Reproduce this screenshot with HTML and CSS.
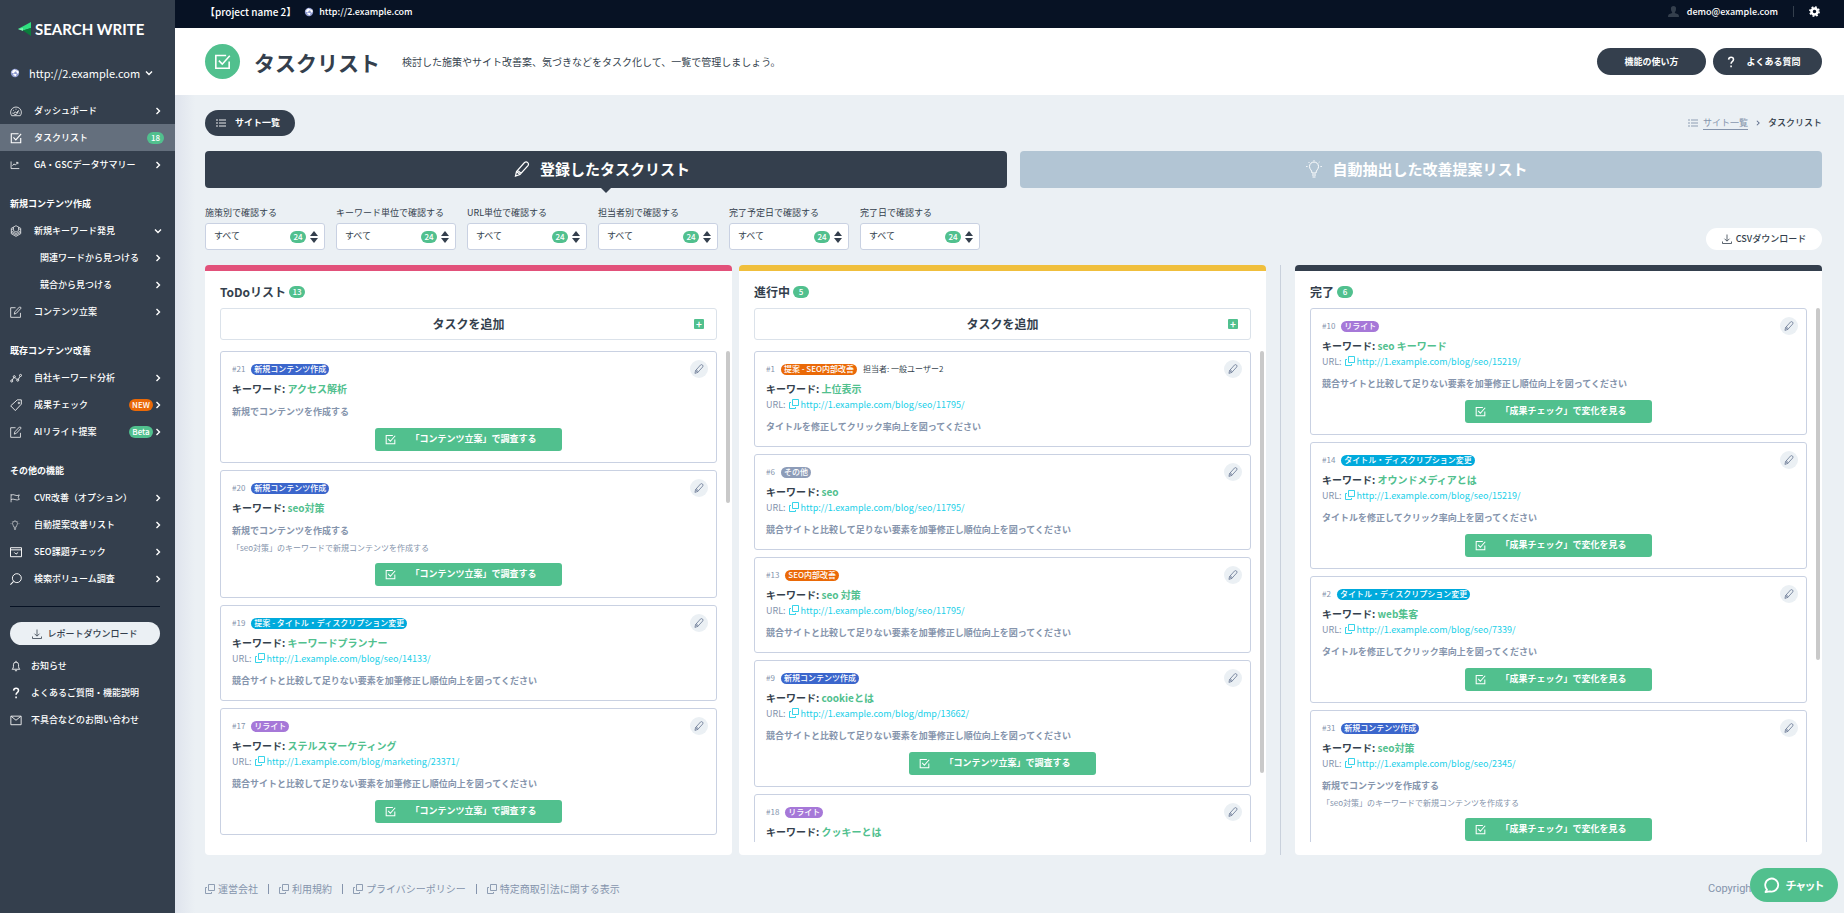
FILE: index.html
```html
<!DOCTYPE html>
<html lang="ja">
<head>
<meta charset="utf-8">
<title>タスクリスト | SEARCH WRITE</title>
<link rel="stylesheet" href="styles.css">
</head>
<body>
<svg class="sprite" aria-hidden="true">
  <symbol id="chev" viewBox="0 0 8 8"><path d="M2.5 1l3 3-3 3" fill="none" stroke="currentColor" stroke-width="1.4"/></symbol>
  <symbol id="chev-down" viewBox="0 0 8 8"><path d="M1 2.5l3 3 3-3" fill="none" stroke="currentColor" stroke-width="1.4"/></symbol>
  <symbol id="globe" viewBox="0 0 12 12"><circle cx="6" cy="6" r="5" fill="#8f9bd0"/><path d="M3 3l3-1.500 1 2-2 2-2 .5zM7.500 4l2.500-1 .5 3-2 1zM5 7l3 .5-1 2.500-1.500 0z" fill="#fff"/><path d="M2 4.500l3 1.500M6 3l3 1M4 8l3 0" stroke="#fff" stroke-width="1.500"/></symbol>
  <symbol id="gauge" viewBox="0 0 14 14"><path d="M2 12.500A6.300 6.300 0 1 1 12 12.500zM5.300 11a1.500 1.500 0 1 1 2.200-1.800L10 6.500 8 10.500q-.5 1-2.700.5M2.700 9.500h1.200M3.700 6l.9.700M7 4.300v1.200M11.300 9.500h-1" fill="none" stroke="currentColor" stroke-width=".9"/></symbol>
  <symbol id="check" viewBox="0 0 14 14"><path d="M12.500 7v5.500H1.500V2H10M4 6.300L6.800 9.200L13 2.200" fill="none" stroke="currentColor" stroke-width="1.300"/></symbol>
  <symbol id="chart" viewBox="0 0 14 14"><path d="M1.500 2v10H13M3.500 8l2-2.500 2 1.500 3.500-3.500M8.500 3.300H11v2.500" fill="none" stroke="currentColor" stroke-width="1.100"/></symbol>
  <symbol id="layers" viewBox="0 0 14 14"><path d="M7 .8l5.500 3v6.400L7 13.300l-5.500-3.100V3.800zM1.500 7L7 10l5.500-3M1.500 8.700L7 11.700l5.500-3M1.500 5.500L4 4.200M12.500 5.500L10 4.200M4 2.500v4L7 8.200l3-1.700v-4" fill="none" stroke="currentColor" stroke-width=".8"/></symbol>
  <symbol id="edit" viewBox="0 0 14 14"><path d="M6.500 2H.8v11.200h11.400V8M5 9.500l.6-2.600L11 1.200q1.500-.4 2 1.200L7.500 8.500z" fill="none" stroke="currentColor" stroke-width=".9"/></symbol>
  <symbol id="nodes" viewBox="0 0 14 14"><g fill="none" stroke="currentColor" stroke-width="1"><circle cx="2" cy="10.500" r="1.200"/><circle cx="5" cy="5.500" r="1.200"/><circle cx="9" cy="9.500" r="1.200"/><circle cx="12.300" cy="4" r="1.200"/><path d="M2.600 9.400L4.400 6.600M5.800 6.400l2.300 2.300M9.700 8.500l2-3.400"/></g></symbol>
  <symbol id="tag" viewBox="0 0 14 14"><path d="M.8 8L8.500 1h4.700v5l-7 7.500zM9.500 4.600a.9.900 0 1 0 1.200-.8.900.9 0 0 0-1.200.8z" fill="none" stroke="currentColor" stroke-width="1"/></symbol>
  <symbol id="flag" viewBox="0 0 14 14"><path d="M1.500 1.500V13M1.500 3q3-1.500 5.500 0t6-.3L11.500 6 13 9q-3 1.500-6 .2t-5.500 0" fill="none" stroke="currentColor" stroke-width="1"/></symbol>
  <symbol id="bulb" viewBox="0 0 16 18"><path d="M6 13c0-3-2.500-3.500-2.500-6.500a4.500 4.500 0 0 1 9 0C12.500 9.500 10 10 10 13zM6 15h4M6.500 17h3M8 .2v1M2.500 2l.9.900M13.500 2l-.9.900M.2 6.500h1.300M14.500 6.500h1.300" fill="none" stroke="currentColor" stroke-width="1"/></symbol>
  <symbol id="window" viewBox="0 0 14 14"><path d="M.6 2h12.800v10.500H.6zM.6 4.500h12.800M5 7.500L7 9.500l2.500-2" fill="none" stroke="currentColor" stroke-width="1.100"/></symbol>
  <symbol id="search" viewBox="0 0 14 14"><circle cx="8" cy="6" r="5.200" fill="none" stroke="currentColor" stroke-width="1.100"/><path d="M4.200 9.800L.5 13.500" stroke="currentColor" stroke-width="1.200"/></symbol>
  <symbol id="download" viewBox="0 0 10 10"><path d="M5 .5v6.500M2.500 4.700L5 7.200l2.500-2.500M.5 7.500v2h9v-2" fill="none" stroke="currentColor" stroke-width=".8"/></symbol>
  <symbol id="bell" viewBox="0 0 14 14"><path d="M2.500 10.800q1.500-1 1.500-3V5.500a3 3 0 0 1 6 0v2.300q0 2 1.500 3zM5.700 12.500h2.600M7 1v1.500" fill="none" stroke="currentColor" stroke-width="1"/></symbol>
  <symbol id="question" viewBox="0 0 14 14"><path d="M4.200 4.200q.2-2.700 2.900-2.700 2.800 0 2.800 2.500 0 1.500-1.500 2.500-1.300.9-1.300 2.500M7.100 11v2" fill="none" stroke="currentColor" stroke-width="1.800"/></symbol>
  <symbol id="mail" viewBox="0 0 14 14"><path d="M1 2.500h12v10H1zM1.500 2.800L7 7.300l5.500-4.500" fill="none" stroke="currentColor" stroke-width="1"/></symbol>
  <symbol id="list" viewBox="0 0 10 8"><path d="M0 1h2M0 4h2M0 7h2M3 1h7M3 4h7M3 7h7" stroke="currentColor" stroke-width=".9"/></symbol>
  <symbol id="pencil" viewBox="0 0 16 16"><path d="M1.500 15L2.500 10.500 10.500 1.500q1.800-1.200 3.200.2t.3 3L6 13.500zM2.500 10.500l3.500 3M3.500 9.300l3.500 3" fill="none" stroke="currentColor" stroke-width="1.200"/></symbol>
  <symbol id="ext" viewBox="0 0 10 10"><path d="M3.500.5h6v6h-6zM2 3.500H.5v6h6V8" fill="none" stroke="currentColor" stroke-width=".9"/></symbol>
  <symbol id="user" viewBox="0 0 12 12"><path d="M6 0q2.800 0 2.800 3Q8.800 5.500 7.500 6.700v1L11 9q1 .5 1 3H0q0-2.500 1-3l3.500-1.300v-1Q3.200 5.500 3.200 3 3.200 0 6 0z" fill="currentColor"/></symbol>
  <symbol id="gear" viewBox="0 0 12 12"><circle cx="6" cy="6" r="3.300" fill="none" stroke="currentColor" stroke-width="2.800"/><circle cx="6" cy="6" r="5" fill="none" stroke="currentColor" stroke-width="1.800" stroke-dasharray="2 1.927"/></symbol>
</svg>

<div class="app">
  <aside class="sidebar">
    <a class="logo" href="#">
      <svg width="13" height="14" viewBox="0 0 13 14" aria-hidden="true"><path d="M0 7L13 0v6L5 8.500z" fill="#2fe07f"/><path d="M0 7l5-1 0 3z" fill="#7df0ae"/><path d="M5 8.500L13 6v8z" fill="#0b7d3c"/></svg>
      <span>SEARCH WRITE</span>
    </a>
    <button class="site" type="button"><svg class="i10"><use href="#globe"/></svg><span>http://2.example.com</span><svg class="i8"><use href="#chev-down"/></svg></button>

    <nav class="nav">
      <a class="item" href="#"><svg><use href="#gauge"/></svg><span>ダッシュボード</span><svg class="i8"><use href="#chev"/></svg></a>
      <a class="item active" href="#"><svg><use href="#check"/></svg><span>タスクリスト</span><b class="badge">18</b></a>
      <a class="item" href="#"><svg class="small"><use href="#chart"/></svg><span>GA・GSCデータサマリー</span><svg class="i8"><use href="#chev"/></svg></a>
      <h2>新規コンテンツ作成</h2>
      <a class="item" href="#"><svg><use href="#layers"/></svg><span>新規キーワード発見</span><svg class="i8 down"><use href="#chev-down"/></svg></a>
      <a class="item sub" href="#"><span>関連ワードから見つける</span><svg class="i8"><use href="#chev"/></svg></a>
      <a class="item sub" href="#"><span>競合から見つける</span><svg class="i8"><use href="#chev"/></svg></a>
      <a class="item" href="#"><svg><use href="#edit"/></svg><span>コンテンツ立案</span><svg class="i8"><use href="#chev"/></svg></a>
      <h2>既存コンテンツ改善</h2>
      <a class="item" href="#"><svg><use href="#nodes"/></svg><span>自社キーワード分析</span><svg class="i8"><use href="#chev"/></svg></a>
      <a class="item" href="#"><svg><use href="#tag"/></svg><span>成果チェック</span><b class="badge wide new">NEW</b><svg class="i8"><use href="#chev"/></svg></a>
      <a class="item" href="#"><svg><use href="#edit"/></svg><span>AIリライト提案</span><b class="badge wide">Beta</b><svg class="i8"><use href="#chev"/></svg></a>
      <h2>その他の機能</h2>
      <a class="item" href="#"><svg class="small"><use href="#flag"/></svg><span>CVR改善（オプション）</span><svg class="i8"><use href="#chev"/></svg></a>
      <a class="item" href="#"><svg class="small"><use href="#bulb"/></svg><span>自動提案改善リスト</span><svg class="i8"><use href="#chev"/></svg></a>
      <a class="item" href="#"><svg><use href="#window"/></svg><span>SEO課題チェック</span><svg class="i8"><use href="#chev"/></svg></a>
      <a class="item" href="#"><svg><use href="#search"/></svg><span>検索ボリューム調査</span><svg class="i8"><use href="#chev"/></svg></a>
    </nav>
    <hr>
    <button class="report" type="button"><svg class="i10"><use href="#download"/></svg>レポートダウンロード</button>
    <nav class="nav help">
      <a class="item" href="#"><svg><use href="#bell"/></svg><span>お知らせ</span></a>
      <a class="item" href="#"><svg><use href="#question"/></svg><span>よくあるご質問・機能説明</span></a>
      <a class="item" href="#"><svg><use href="#mail"/></svg><span>不具合などのお問い合わせ</span></a>
    </nav>
  </aside>

  <div class="main">
    <div class="topbar">
      <span class="project">【project name 2】</span>
      <a class="host" href="#"><svg class="i10"><use href="#globe"/></svg>http://2.example.com</a>
      <a class="account" href="#"><svg class="i12"><use href="#user"/></svg>demo@example.com</a>
      <button class="settings" type="button" aria-label="設定"><svg class="i12"><use href="#gear"/></svg></button>
    </div>

    <header class="header">
      <span class="page-icon"><svg><use href="#check"/></svg></span>
      <h1>タスクリスト</h1>
      <p>検討した施策やサイト改善案、気づきなどをタスク化して、一覧で管理しましょう。</p>
      <button class="pill" type="button">機能の使い方</button>
      <button class="pill faq" type="button"><svg><use href="#question"/></svg>よくある質問</button>
    </header>

    <div class="content">
      <div class="crumb-row">
        <a class="sites" href="#"><svg><use href="#list"/></svg>サイト一覧</a>
        <nav class="crumbs"><svg class="list"><use href="#list"/></svg><a href="#">サイト一覧</a><svg class="sep"><use href="#chev"/></svg><b>タスクリスト</b></nav>
      </div>

      <div class="tabs">
        <button class="tab on" type="button"><svg class="i16"><use href="#pencil"/></svg>登録したタスクリスト</button>
        <button class="tab" type="button"><svg class="bulb"><use href="#bulb"/></svg>自動抽出した改善提案リスト</button>
      </div>

      <div class="filters">
        <div class="filter"><label for="f1">施策別で確認する</label><div class="select"><select id="f1"><option>すべて</option></select><b class="badge">24</b><i></i></div></div>
        <div class="filter"><label for="f2">キーワード単位で確認する</label><div class="select"><select id="f2"><option>すべて</option></select><b class="badge">24</b><i></i></div></div>
        <div class="filter"><label for="f3">URL単位で確認する</label><div class="select"><select id="f3"><option>すべて</option></select><b class="badge">24</b><i></i></div></div>
        <div class="filter"><label for="f4">担当者別で確認する</label><div class="select"><select id="f4"><option>すべて</option></select><b class="badge">24</b><i></i></div></div>
        <div class="filter"><label for="f5">完了予定日で確認する</label><div class="select"><select id="f5"><option>すべて</option></select><b class="badge">24</b><i></i></div></div>
        <div class="filter"><label for="f6">完了日で確認する</label><div class="select"><select id="f6"><option>すべて</option></select><b class="badge">24</b><i></i></div></div>
        <button class="csv" type="button"><svg class="i10"><use href="#download"/></svg>CSVダウンロード</button>
      </div>

      <div class="board">
        <section class="col todo">
          <h3>ToDoリスト<b class="badge">13</b></h3>
          <button class="add" type="button">タスクを追加<span>+</span></button>
          <div class="scroll">
            <div class="cards">
              <article class="card">
                <button class="edit" type="button" aria-label="編集"><svg><use href="#pencil"/></svg></button>
                <div class="meta">#21<span class="tag blue">新規コンテンツ作成</span></div>
                <h4>キーワード: <em>アクセス解析</em></h4>
                <p class="desc">新規でコンテンツを作成する</p>
                <button class="cta" type="button"><svg><use href="#check"/></svg>「コンテンツ立案」で調査する</button>
              </article>
              <article class="card">
                <button class="edit" type="button" aria-label="編集"><svg><use href="#pencil"/></svg></button>
                <div class="meta">#20<span class="tag blue">新規コンテンツ作成</span></div>
                <h4>キーワード: <em>seo対策</em></h4>
                <p class="desc">新規でコンテンツを作成する</p>
                <p class="note">「seo対策」のキーワードで新規コンテンツを作成する</p>
                <button class="cta" type="button"><svg><use href="#check"/></svg>「コンテンツ立案」で調査する</button>
              </article>
              <article class="card">
                <button class="edit" type="button" aria-label="編集"><svg><use href="#pencil"/></svg></button>
                <div class="meta">#19<span class="tag cyan">提案 - タイトル・ディスクリプション変更</span></div>
                <h4>キーワード: <em>キーワードプランナー</em></h4>
                <p class="url">URL: <a href="#"><svg><use href="#ext"/></svg>http://1.example.com/blog/seo/14133/</a></p>
                <p class="desc">競合サイトと比較して足りない要素を加筆修正し順位向上を図ってください</p>
              </article>
              <article class="card">
                <button class="edit" type="button" aria-label="編集"><svg><use href="#pencil"/></svg></button>
                <div class="meta">#17<span class="tag purple">リライト</span></div>
                <h4>キーワード: <em>ステルスマーケティング</em></h4>
                <p class="url">URL: <a href="#"><svg><use href="#ext"/></svg>http://1.example.com/blog/marketing/23371/</a></p>
                <p class="desc">競合サイトと比較して足りない要素を加筆修正し順位向上を図ってください</p>
                <button class="cta" type="button"><svg><use href="#check"/></svg>「コンテンツ立案」で調査する</button>
              </article>
            </div>
            <span class="thumb"></span>
          </div>
        </section>

        <section class="col doing">
          <h3>進行中<b class="badge">5</b></h3>
          <button class="add" type="button">タスクを追加<span>+</span></button>
          <div class="scroll">
            <div class="cards">
              <article class="card">
                <button class="edit" type="button" aria-label="編集"><svg><use href="#pencil"/></svg></button>
                <div class="meta">#1<span class="tag orange">提案 - SEO内部改善</span><span class="owner">担当者: 一般ユーザー2</span></div>
                <h4>キーワード: <em>上位表示</em></h4>
                <p class="url">URL: <a href="#"><svg><use href="#ext"/></svg>http://1.example.com/blog/seo/11795/</a></p>
                <p class="desc">タイトルを修正してクリック率向上を図ってください</p>
              </article>
              <article class="card">
                <button class="edit" type="button" aria-label="編集"><svg><use href="#pencil"/></svg></button>
                <div class="meta">#6<span class="tag gray">その他</span></div>
                <h4>キーワード: <em>seo</em></h4>
                <p class="url">URL: <a href="#"><svg><use href="#ext"/></svg>http://1.example.com/blog/seo/11795/</a></p>
                <p class="desc">競合サイトと比較して足りない要素を加筆修正し順位向上を図ってください</p>
              </article>
              <article class="card">
                <button class="edit" type="button" aria-label="編集"><svg><use href="#pencil"/></svg></button>
                <div class="meta">#13<span class="tag orange">SEO内部改善</span></div>
                <h4>キーワード: <em>seo 対策</em></h4>
                <p class="url">URL: <a href="#"><svg><use href="#ext"/></svg>http://1.example.com/blog/seo/11795/</a></p>
                <p class="desc">競合サイトと比較して足りない要素を加筆修正し順位向上を図ってください</p>
              </article>
              <article class="card">
                <button class="edit" type="button" aria-label="編集"><svg><use href="#pencil"/></svg></button>
                <div class="meta">#9<span class="tag blue">新規コンテンツ作成</span></div>
                <h4>キーワード: <em>cookieとは</em></h4>
                <p class="url">URL: <a href="#"><svg><use href="#ext"/></svg>http://1.example.com/blog/dmp/13662/</a></p>
                <p class="desc">競合サイトと比較して足りない要素を加筆修正し順位向上を図ってください</p>
                <button class="cta" type="button"><svg><use href="#check"/></svg>「コンテンツ立案」で調査する</button>
              </article>
              <article class="card cut">
                <button class="edit" type="button" aria-label="編集"><svg><use href="#pencil"/></svg></button>
                <div class="meta">#18<span class="tag purple">リライト</span></div>
                <h4>キーワード: <em>クッキーとは</em></h4>
              </article>
            </div>
            <span class="thumb"></span>
          </div>
        </section>

        <span class="rule"></span>

        <section class="col done">
          <h3>完了<b class="badge">6</b></h3>
          <div class="scroll">
            <div class="cards">
              <article class="card">
                <button class="edit" type="button" aria-label="編集"><svg><use href="#pencil"/></svg></button>
                <div class="meta">#10<span class="tag purple">リライト</span></div>
                <h4>キーワード: <em>seo キーワード</em></h4>
                <p class="url">URL: <a href="#"><svg><use href="#ext"/></svg>http://1.example.com/blog/seo/15219/</a></p>
                <p class="desc">競合サイトと比較して足りない要素を加筆修正し順位向上を図ってください</p>
                <button class="cta" type="button"><svg><use href="#check"/></svg>「成果チェック」で変化を見る</button>
              </article>
              <article class="card">
                <button class="edit" type="button" aria-label="編集"><svg><use href="#pencil"/></svg></button>
                <div class="meta">#14<span class="tag cyan">タイトル・ディスクリプション変更</span></div>
                <h4>キーワード: <em>オウンドメディアとは</em></h4>
                <p class="url">URL: <a href="#"><svg><use href="#ext"/></svg>http://1.example.com/blog/seo/15219/</a></p>
                <p class="desc">タイトルを修正してクリック率向上を図ってください</p>
                <button class="cta" type="button"><svg><use href="#check"/></svg>「成果チェック」で変化を見る</button>
              </article>
              <article class="card">
                <button class="edit" type="button" aria-label="編集"><svg><use href="#pencil"/></svg></button>
                <div class="meta">#2<span class="tag cyan">タイトル・ディスクリプション変更</span></div>
                <h4>キーワード: <em>web集客</em></h4>
                <p class="url">URL: <a href="#"><svg><use href="#ext"/></svg>http://1.example.com/blog/seo/7339/</a></p>
                <p class="desc">タイトルを修正してクリック率向上を図ってください</p>
                <button class="cta" type="button"><svg><use href="#check"/></svg>「成果チェック」で変化を見る</button>
              </article>
              <article class="card">
                <button class="edit" type="button" aria-label="編集"><svg><use href="#pencil"/></svg></button>
                <div class="meta">#31<span class="tag blue">新規コンテンツ作成</span></div>
                <h4>キーワード: <em>seo対策</em></h4>
                <p class="url">URL: <a href="#"><svg><use href="#ext"/></svg>http://1.example.com/blog/seo/2345/</a></p>
                <p class="desc">新規でコンテンツを作成する</p>
                <p class="note">「seo対策」のキーワードで新規コンテンツを作成する</p>
                <button class="cta" type="button"><svg><use href="#check"/></svg>「成果チェック」で変化を見る</button>
              </article>
            </div>
            <span class="thumb"></span>
          </div>
        </section>
      </div>

      <footer class="footer">
        <a href="#"><svg><use href="#ext"/></svg>運営会社</a>
        <a href="#"><svg><use href="#ext"/></svg>利用規約</a>
        <a href="#"><svg><use href="#ext"/></svg>プライバシーポリシー</a>
        <a href="#"><svg><use href="#ext"/></svg>特定商取引法に関する表示</a>
        <small>Copyright</small>
      </footer>
    </div>
  </div>
</div>
<button class="chat" type="button"><svg viewBox="0 0 16 16" aria-hidden="true"><path d="M3 12.500A6.500 6.500 0 1 1 6 14.300L1.500 15z" fill="none" stroke="currentColor" stroke-width="1.800" stroke-linejoin="round"/></svg>チャット</button>
</body>
</html>
```
FILE: styles.css
```css
* { box-sizing: border-box; }
body, h1, h2, h3, h4, p { margin: 0; }
body {
  font: 500 9px/16px "Noto Sans CJK JP", sans-serif;
  color: #343f4d;
  background: #ebf0f4;
}
button { font: inherit; color: inherit; border: 0; background: none; padding: 0; }
a { color: inherit; text-decoration: none; }
svg { flex: none; width: 12px; height: 12px; }
em, i { font-style: normal; }
.sprite { display: none; }
.i8 { width: 8px; height: 8px; }
.i10 { width: 10px; height: 10px; }
.i12 { width: 11px; height: 11px; }
.i16 { width: 16px; height: 16px; }
.badge {
  display: inline-flex; align-items: center; justify-content: center;
  min-width: 16px; height: 12px; padding: 0 3px; border-radius: 6px;
  background: #51c08e; color: #fff; font-size: 8px; font-weight: 500; line-height: 12px;
}

.app { display: flex; height: 100vh; }

/* Sidebar */
.sidebar { flex: none; width: 175px; background: #343f4d; color: #fff; overflow: hidden; }
.logo { display: flex; align-items: center; gap: 4px; height: 58px; padding-left: 18px; font: 700 15px/16px Lato, sans-serif; }
.logo svg { width: 13px; height: 14px; }
.site { display: flex; align-items: center; width: 100%; height: 30px; padding: 0 22px 0 10px; font-size: 11px; font-weight: 400; }
.site span { margin: 0 auto 0 9px; }
.nav { padding-top: 9px; }
.nav h2 { height: 27px; margin-top: 12px; padding-left: 10px; font-size: 9px; font-weight: 700; line-height: 27px; }
.item { display: flex; align-items: center; height: 27px; padding: 0 13px 0 10px; }
.item > span { margin: 0 auto 0 12px; }
.item .small { width: 10px; height: 10px; margin-right: 2px; }
.item.active { background: #646f7d; padding-right: 11px; }
.item.active .badge { min-width: 17px; }
.item.sub > span { margin-left: 30px; }
.badge.wide { min-width: 24px; margin-right: 1px; padding: 0 2px; }
.badge.new { background: #ea6907; }
hr { height: 1px; margin: 14px 15px 15px 10px; border: 0; background: #071224; }
.report {
  display: flex; align-items: center; justify-content: center; gap: 5px;
  width: 150px; height: 23px; margin-left: 10px; border-radius: 12px;
  background: #ebf0f4; color: #343f4d;
}
.help { padding-top: 7px; }
.help .item > span { margin-left: 9px; }

/* Top bar and page header */
.main { flex: 1; min-width: 0; display: flex; flex-direction: column; }
.topbar { display: flex; align-items: center; height: 28px; padding: 0 30px 5px 30px; background: #071224; color: #fff; }
.project { font-size: 10px; line-height: 16px; }
.host, .account { display: flex; align-items: center; gap: 5px; }
.host { margin: 0 auto 0 8px; }
.account { gap: 8px; padding-right: 15px; border-right: 1px solid #343f4d; line-height: 10px; }
.account svg { color: #343f4d; }
.settings { display: flex; margin: 0 -6px 0 15px; }
.header { display: flex; align-items: center; height: 67px; padding: 0 22px 0 30px; background: #fff; }
.page-icon { display: flex; align-items: center; justify-content: center; width: 35px; height: 35px; border-radius: 50%; background: #51c08e; color: #fff; }
.page-icon svg { width: 17px; height: 17px; }
h1 { margin: 0 22px 0 14px; font-size: 21px; font-weight: 700; line-height: 32px; }
.header p { margin-right: auto; font-size: 10px; font-weight: 400; }
.pill { display: flex; align-items: center; justify-content: center; gap: 9px; width: 109px; height: 27px; margin-left: 7px; border-radius: 14px; background: #343f4d; color: #fff; font-weight: 700; }
.faq { padding-right: 9px; }

/* Content */
.content { flex: 1; min-height: 0; display: flex; flex-direction: column; padding: 15px 22px 0 30px; background: linear-gradient(90deg, #dfe4ed, #ebf0f4 20px); }
.crumb-row { display: flex; align-items: center; justify-content: space-between; }
.sites { display: flex; align-items: center; gap: 9px; height: 26px; padding: 0 15px 0 11px; border-radius: 13px; background: #343f4d; color: #fff; font-weight: 700; }
.sites svg, .list { width: 10px; height: 8px; }
.crumbs { display: flex; align-items: center; gap: 5px; }
.crumbs a { color: #8594ac; font-weight: 400; line-height: 12px; border-bottom: 1px solid #8594ac; }
.crumbs svg { color: #8594ac; }
.crumbs b { font-weight: 500; }
.crumbs .sep { width: 6px; height: 6px; margin: 0 2px; color: #5f6f8c; }
.tabs { display: grid; grid-template-columns: 1fr 1fr; gap: 13px; margin-top: 15px; }
.tab { position: relative; display: flex; align-items: center; justify-content: center; gap: 10px; height: 37px; padding: 0 8px 2px 0; border-radius: 4px; background: #b2c5d4; color: #fff; font-size: 15px; font-weight: 700; }
.tab.on { background: #343f4d; }
.tab.on::after { content: ""; position: absolute; top: 100%; left: 50%; margin-left: -5px; border: 5px solid transparent; border-top-color: #343f4d; border-bottom: 0; }
.tab .bulb { width: 16px; height: 18px; }
.filters { display: flex; align-items: flex-end; gap: 11px; margin-top: 17px; font-weight: 400; }
.filter label { display: block; margin-bottom: 2px; }
.select { position: relative; width: 120px; }
select { appearance: none; display: block; width: 100%; height: 27px; padding: 0 8px 2px; border: 1px solid #c9d1e2; border-radius: 3px; background: #fff; color: #343f4d; font: inherit; }
.select .badge { position: absolute; top: 8px; right: 19px; }
.select i { position: absolute; top: 8px; right: 8px; width: 7px; height: 12px; }
.select i::before, .select i::after { content: ""; position: absolute; left: 0; border: 4px solid transparent; }
.select i::before { top: 0; border-bottom: 5px solid #343f4d; border-top: 0; }
.select i::after { bottom: 0; border-top: 5px solid #343f4d; border-bottom: 0; }
.csv { display: flex; align-items: center; justify-content: center; gap: 4px; width: 116px; height: 22px; margin-left: auto; border-radius: 11px; background: #fff; font-weight: 500; }

/* Board */
.board { flex: 1; min-height: 0; display: flex; margin-top: 15px; }
.col { flex: 1; min-width: 0; display: flex; flex-direction: column; padding: 11px 15px 13px; border-top: 6px solid #343f4d; border-radius: 4px; background: #fff; }
.todo { margin-right: 7px; border-color: #e2517a; }
.doing { border-color: #f0bf3c; }
.rule { width: 1px; margin: 0 14px; background: #c9d1dc; }
h3 { display: flex; align-items: center; gap: 3px; height: 20px; margin-bottom: 6px; font-size: 12px; font-weight: 700; line-height: 20px; }
.add { position: relative; flex: none; height: 32px; margin-bottom: 11px; border: 1px solid #dbe2ea; border-radius: 3px; font-size: 12px; font-weight: 700; }
.add span { position: absolute; top: 10px; right: 12px; width: 10px; height: 10px; border-radius: 1px; background: #51c08e; color: #fff; font-size: 10px; line-height: 9px; }
.scroll { position: relative; flex: 1; min-height: 0; }
.cards { display: flex; flex-direction: column; gap: 7px; height: 100%; overflow-y: auto; scrollbar-width: none; }
.thumb { position: absolute; top: 0; right: -13px; width: 4px; height: 31%; border-radius: 2px; background: #c9c9c9; }
.doing .thumb { height: 86%; }
.done .thumb { height: 66%; }
.card { position: relative; flex: none; display: flex; flex-direction: column; padding: 9px 11px 10px; border: 1px solid #c9d1e2; border-radius: 3px; }
.cut { padding-bottom: 80px; }
.edit { position: absolute; top: 8px; right: 8px; display: flex; align-items: center; justify-content: center; width: 18px; height: 18px; border-radius: 50%; background: #ebf0f4; color: #5f6f8c; }
.edit svg { width: 10px; height: 10px; }
.meta { display: flex; align-items: center; gap: 6px; height: 16px; color: #8594ac; font-size: 8px; font-weight: 400; }
.tag { height: 11px; padding: 0 3px; border-radius: 6px; color: #fff; font-weight: 500; line-height: 10px; }
.owner { color: #343f4d; }
.blue { background: #3b66cc; }
.cyan { background: #00aadc; }
.purple { background: #a678d8; }
.orange { background: #ea6907; }
.gray { background: #8d9cb8; }
h4 { margin-top: 4px; padding-bottom: 1px; font-size: 10px; font-weight: 700; line-height: 15px; }
h4 em { color: #51c08e; }
.url { color: #8594ac; font-weight: 400; line-height: 15px; }
.url a { color: #20cfe8; }
.url svg { width: 10px; height: 10px; margin: 0 2px -1px 1px; }
.desc { margin-top: 7px; padding-bottom: 1px; color: #8594ac; font-weight: 700; }
.note { color: #8594ac; font-size: 8px; font-weight: 400; }
.cta { position: relative; align-self: center; width: 187px; height: 23px; margin: 7px 0 1px; padding: 0 0 1px 10px; border-radius: 3px; background: #51c08e; color: #fff; font-weight: 700; }
.cta svg { position: absolute; left: 10px; top: 6px; width: 11px; height: 11px; }

/* Footer */
.footer { flex: none; display: flex; align-items: center; height: 58px; padding-top: 10px; color: #8594ac; font-size: 10px; font-weight: 400; }
.footer a { display: flex; align-items: center; gap: 3px; line-height: 10px; }
.footer a + a { margin-left: 10px; padding-left: 10px; border-left: 1px solid #8594ac; }
.footer svg { width: 10px; height: 10px; }
.footer small { margin: 0 67px 0 auto; font: 400 11px/16px Roboto, sans-serif; }
.chat { position: fixed; right: 6px; bottom: 11px; display: flex; align-items: center; justify-content: center; gap: 6px; width: 88px; height: 34px; border-radius: 17px; background: #51c08e; color: #fff; font-size: 11px; font-weight: 700; font-feature-settings: "palt"; }
.chat svg { width: 16px; height: 16px; }
```
